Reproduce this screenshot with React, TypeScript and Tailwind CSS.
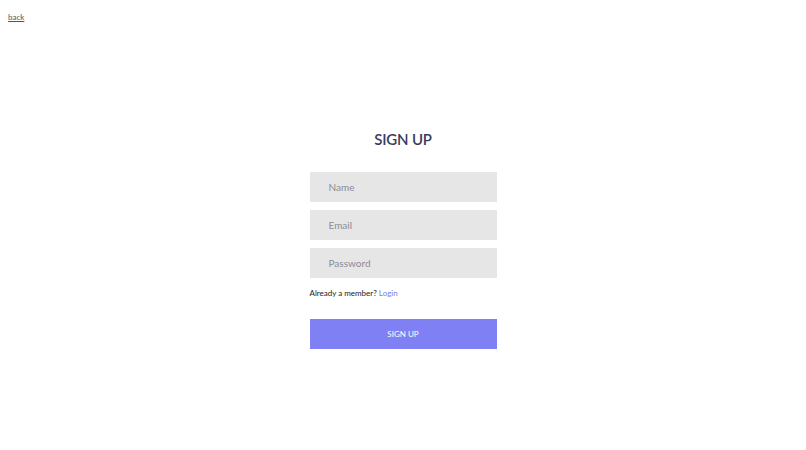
import React from "react";

function App() {
	return (
		<div className="min-h-[450px] w-full bg-white font-['Lato',sans-serif]">
			{/* back link */}
			<div className="pl-2 pt-[11px]">
				<a href="#" className="block text-[8px] leading-[12px] text-[#555] underline">
					back
				</a>
			</div>
			{/* form */}
			<div className="mx-auto mt-[104px] flex w-[187px] flex-col">
				<h1 className="text-center text-[15px] leading-[24px] font-semibold tracking-[-0.2px] text-[#3b3a5e]">
					SIGN UP
				</h1>
				<div className="mt-[21px] flex flex-col gap-2">
					<input
						type="text"
						placeholder="Name"
						className="h-[30px] w-full bg-[#e6e6e6] pl-[19px] text-[10px] text-[#333] placeholder:text-[#8b8b95] outline-none"
					/>
					<input
						type="email"
						placeholder="Email"
						className="h-[30px] w-full bg-[#e6e6e6] pl-[19px] text-[10px] text-[#333] placeholder:text-[#8b8b95] outline-none"
					/>
					<input
						type="password"
						placeholder="Password"
						className="h-[30px] w-full bg-[#e6e6e6] pl-[19px] text-[10px] text-[#333] placeholder:text-[#8b8b95] outline-none"
					/>
				</div>
				<p className="mt-[9px] text-[8px] leading-[12px] text-[#222]">
					Already a member? <a href="#" className="text-[#7b7be8]">Login</a>
				</p>
				<button className="mt-[20px] h-[30px] w-full bg-[#8080f5] text-[8px] text-white">
					SIGN UP
				</button>
			</div>
		</div>
	);
}

export default App;
